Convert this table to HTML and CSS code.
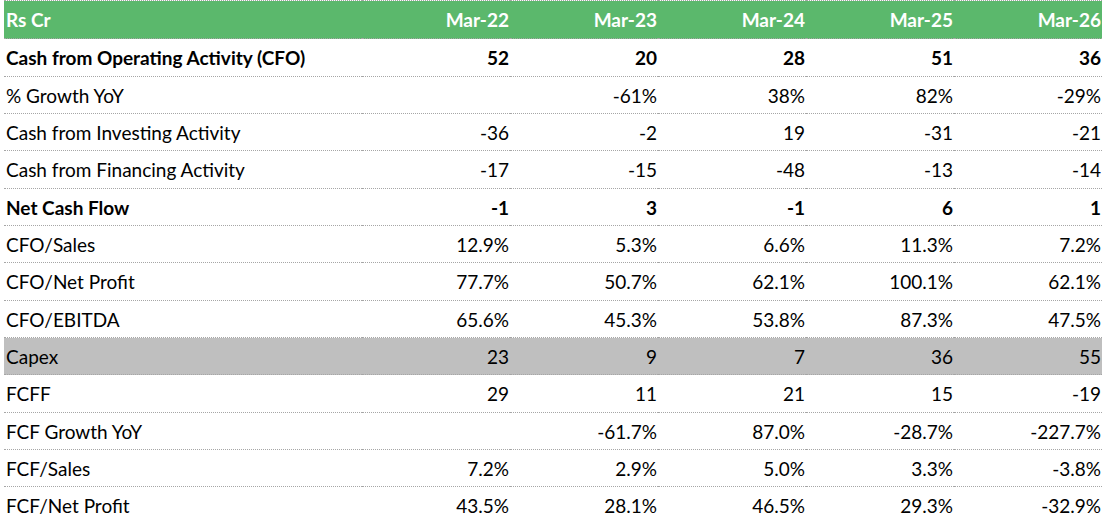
FILE: index.html
```html
<!DOCTYPE html>
<html>
<head>
<meta charset="utf-8">
<link rel="stylesheet" href="styles.css">
</head>
<body>
<table class="cf">
  <colgroup>
    <col class="c-label"><col class="c-num"><col class="c-num"><col class="c-num"><col class="c-num"><col class="c-num">
  </colgroup>
  <thead>
    <tr class="head h38"><th>Rs Cr</th><th>Mar-22</th><th>Mar-23</th><th>Mar-24</th><th>Mar-25</th><th>Mar-26</th></tr>
  </thead>
  <tbody>
    <tr class="bold h38"><td>Cash from Operating Activity (CFO)</td><td>52</td><td>20</td><td>28</td><td>51</td><td>36</td></tr>
    <tr class="h37"><td>% Growth YoY</td><td></td><td>-61%</td><td>38%</td><td>82%</td><td>-29%</td></tr>
    <tr class="h37"><td>Cash from Investing Activity</td><td>-36</td><td>-2</td><td>19</td><td>-31</td><td>-21</td></tr>
    <tr class="h38"><td>Cash from Financing Activity</td><td>-17</td><td>-15</td><td>-48</td><td>-13</td><td>-14</td></tr>
    <tr class="bold h37"><td>Net Cash Flow</td><td>-1</td><td>3</td><td>-1</td><td>6</td><td>1</td></tr>
    <tr class="h37"><td>CFO/Sales</td><td>12.9%</td><td>5.3%</td><td>6.6%</td><td>11.3%</td><td>7.2%</td></tr>
    <tr class="h38"><td>CFO/Net Profit</td><td>77.7%</td><td>50.7%</td><td>62.1%</td><td>100.1%</td><td>62.1%</td></tr>
    <tr class="h37"><td>CFO/EBITDA</td><td>65.6%</td><td>45.3%</td><td>53.8%</td><td>87.3%</td><td>47.5%</td></tr>
    <tr class="shade h37"><td>Capex</td><td>23</td><td>9</td><td>7</td><td>36</td><td>55</td></tr>
    <tr class="h38"><td>FCFF</td><td>29</td><td>11</td><td>21</td><td>15</td><td>-19</td></tr>
    <tr class="h37"><td>FCF Growth YoY</td><td></td><td>-61.7%</td><td>87.0%</td><td>-28.7%</td><td>-227.7%</td></tr>
    <tr class="h37"><td>FCF/Sales</td><td>7.2%</td><td>2.9%</td><td>5.0%</td><td>3.3%</td><td>-3.8%</td></tr>
    <tr class="h38"><td>FCF/Net Profit</td><td>43.5%</td><td>28.1%</td><td>46.5%</td><td>29.3%</td><td>-32.9%</td></tr>
  </tbody>
</table>
</body>
</html>
```
FILE: styles.css
```css
html, body {
  margin: 0;
  padding: 0;
  background: #ffffff;
}
body {
  padding: 0 1px 0 4px;
  font-family: Lato, "Open Sans", sans-serif;
  font-size: 19px;
  color: #000000;
}
.cf {
  border-collapse: collapse;
  table-layout: fixed;
  width: 1098px;
  border-top: 1px dotted #a6a6a6;
}
.c-label { width: 358px; }
.c-num { width: 148px; }
.cf th, .cf td {
  padding: 0 1px 0 2px;
  border-bottom: 1px dotted #a6a6a6;
  text-align: right;
  white-space: nowrap;
  vertical-align: middle;
  line-height: 1;
}
.cf th:first-child, .cf td:first-child {
  text-align: left;
  padding-left: 2px;
}
.head th {
  background: #5bb86c;
  color: #ffffff;
  font-weight: 700;
}
.bold td { font-weight: 700; }
.shade td { background: #bfbfbf; }
.h37 { height: 37px; }
.h38 { height: 38px; }
```
